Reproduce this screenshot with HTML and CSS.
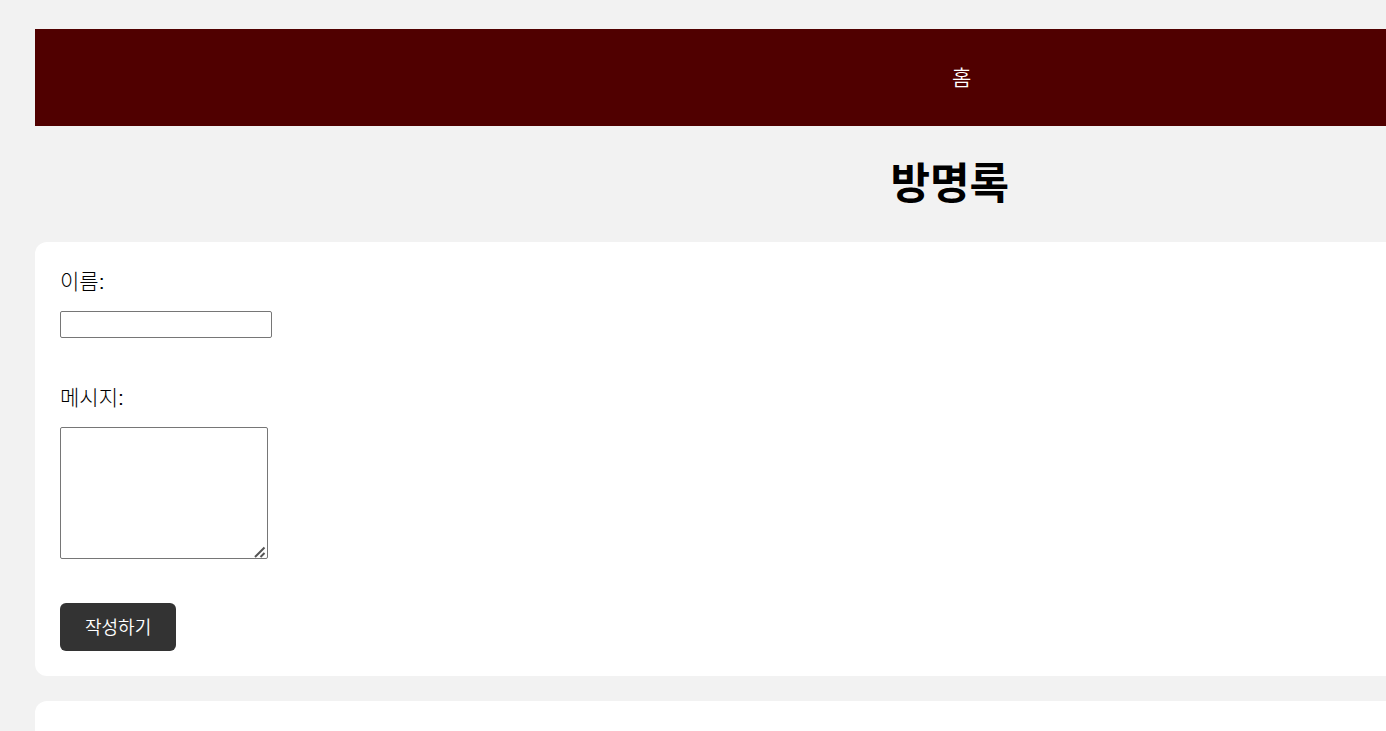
FILE: index.html
```html
<!DOCTYPE html>
<html lang="ko">
<head>
<meta charset="utf-8">
<title>방명록</title>
<link rel="stylesheet" href="styles.css">
</head>
<body>
<div class="page">
  <nav class="nav">
    <ul class="nav-list">
      <li><a class="nav-link" href="#">홈</a></li>
    </ul>
  </nav>
  <h1 class="title">방명록</h1>
  <form class="card">
    <label class="label" for="name">이름:</label>
    <input class="field name" type="text" id="name">
    <label class="label" for="message">메시지:</label>
    <div class="message-box">
      <textarea class="field message" id="message"></textarea>
      <svg class="grip" width="12" height="12" viewBox="0 0 12 12" aria-hidden="true">
        <path d="M1 11 10.500 1.500M6.500 11 10.500 7" fill="none" stroke="#555" stroke-width="2"/>
      </svg>
    </div>
    <button class="submit" type="submit">작성하기</button>
  </form>
  <section class="card"></section>
</div>
</body>
</html>
```
FILE: styles.css
```css
html {
  overflow: hidden;
}

body {
  margin: 0;
  padding: 29px 35px;
  background: #f2f2f2;
  color: #000;
  font-family: "Liberation Sans", "Noto Sans CJK KR", sans-serif;
  font-size: 21px;
  line-height: 30px;
}

.page {
  width: 132vw;
}

.nav {
  padding: 34px 0 33px;
  background: #500000;
}

.nav-list {
  display: flex;
  justify-content: center;
  margin: 0;
  padding: 0 0 0 24px;
  list-style: none;
}

.nav-link {
  color: #fff;
  font-weight: 350;
  text-decoration: none;
}

.title {
  margin: 28px 0;
  font-size: 43px;
  font-weight: 700;
  line-height: 60px;
  text-align: center;
}

.card {
  display: flex;
  flex-direction: column;
  align-items: flex-start;
  box-sizing: border-box;
  min-height: 120px;
  margin-bottom: 25px;
  padding: 25px;
  border-radius: 12px;
  background: #fff;
}

.label {
  margin-bottom: 14px;
  font-weight: 300;
}

.field {
  box-sizing: border-box;
  margin: 0;
  border: 1px solid #767676;
  border-radius: 2px;
  background: #fff;
  font-size: 17px;
}

.name {
  width: 212px;
  height: 27px;
  margin-bottom: 45px;
}

.message-box {
  display: flex;
  position: relative;
  margin-bottom: 44px;
}

.message {
  width: 208px;
  height: 132px;
}

.message::-webkit-resizer {
  background: transparent;
}

.grip {
  position: absolute;
  right: 2px;
  bottom: 1px;
  pointer-events: none;
}

.submit {
  padding: 13px 25px 11px;
  border: 0;
  border-radius: 6px;
  background: #333;
  color: #fff;
  font: 350 18px/24px "Liberation Sans", "Noto Sans CJK KR", sans-serif;
}
```
